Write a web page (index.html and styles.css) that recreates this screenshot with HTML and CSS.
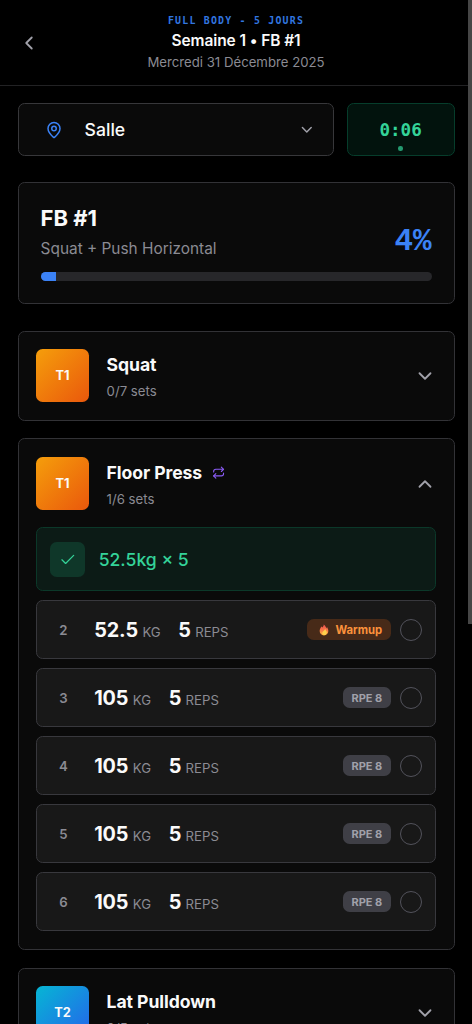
FILE: index.html
```html
<!DOCTYPE html>
<html lang="fr">
<head>
<meta charset="utf-8">
<title>Semaine 1 • FB #1</title>
<link rel="stylesheet" href="styles.css">
</head>
<body>
<div class="screen">
  <header class="header">
    <svg class="back" viewBox="0 0 24 24"><path d="m15 18-6-6 6-6"/></svg>
    <div class="heading">
      <div class="program">FULL BODY - 5 JOURS</div>
      <h1 class="title">Semaine 1 • FB #1</h1>
      <div class="date">Mercredi 31 Décembre 2025</div>
    </div>
  </header>
  <main class="main">
    <div class="controls">
      <div class="place">
        <svg class="pin" viewBox="0 0 24 24"><path d="M20 10c0 4.993-5.539 10.193-7.399 11.799a1 1 0 0 1-1.202 0C9.539 20.193 4 14.993 4 10a8 8 0 0 1 16 0"/><circle cx="12" cy="10" r="3"/></svg>
        <span class="place-name">Salle</span>
        <svg class="chevron small" viewBox="0 0 24 24"><path d="m6 9 6 6 6-6"/></svg>
      </div>
      <div class="timer">0:06<span class="dot"></span></div>
    </div>
    <section class="card summary">
      <div class="summary-top">
        <div>
          <h2 class="session">FB #1</h2>
          <div class="focus">Squat + Push Horizontal</div>
        </div>
        <div class="percent">4%</div>
      </div>
      <div class="track"><div class="fill" style="width:4%"></div></div>
    </section>
    <section class="card exercise">
      <div class="exercise-head">
        <div class="tier">T1</div>
        <div class="info"><h3 class="name">Squat</h3><div class="count">0/7 sets</div></div>
        <svg class="chevron" viewBox="0 0 24 24"><path d="m6 9 6 6 6-6"/></svg>
      </div>
    </section>
    <section class="card exercise">
      <div class="exercise-head">
        <div class="tier">T1</div>
        <div class="info"><h3 class="name">Floor Press <svg class="repeat" viewBox="0 0 24 24"><path d="m17 2 4 4-4 4"/><path d="M3 11v-1a4 4 0 0 1 4-4h14"/><path d="m7 22-4-4 4-4"/><path d="M21 13v1a4 4 0 0 1-4 4H3"/></svg></h3><div class="count">1/6 sets</div></div>
        <svg class="chevron" viewBox="0 0 24 24"><path d="m18 15-6-6-6 6"/></svg>
      </div>
      <div class="sets">
        <div class="done"><span class="tick"><svg viewBox="0 0 24 24"><path d="M20 6 9 17l-5-5"/></svg></span><span>52.5kg × 5</span></div>
        <div class="set"><span class="num">2</span><b class="value">52.5</b><span class="unit">KG</span><b class="value reps">5</b><span class="unit">REPS</span><span class="tag warm"><svg class="flame" viewBox="0 0 12 14"><defs><linearGradient id="fire" x1="0" y1="0" x2="0" y2="1"><stop offset="0" stop-color="#e94f50"/><stop offset=".5" stop-color="#f97849"/><stop offset="1" stop-color="#ffb338"/></linearGradient></defs><path fill="url(#fire)" d="M5.6.4C6 2.2 4.6 3 3.7 4 3.3 3.7 3.4 3 3.4 2.6 1.8 4.2.8 6 .8 8.3c0 3 2.2 5.2 5.2 5.2s5.2-2.2 5.2-5.2c0-2-1-3.3-1.5-4.8-.5.5-.7 1.100-.8 1.600C8.300 3.200 7.300 1.300 5.600.4Z"/><path fill="#ffd14d" d="M7.300 5.500c.2 2-2.500 2.500-3.300 4.500-.6 1.500.5 3 2.200 3s3.400-1.300 3.200-3.400C9.300 8.300 8 7.500 7.300 5.500Z"/></svg>Warmup</span><span class="ring"></span></div>
        <div class="set"><span class="num">3</span><b class="value">105</b><span class="unit">KG</span><b class="value reps">5</b><span class="unit">REPS</span><span class="tag">RPE 8</span><span class="ring"></span></div>
        <div class="set"><span class="num">4</span><b class="value">105</b><span class="unit">KG</span><b class="value reps">5</b><span class="unit">REPS</span><span class="tag">RPE 8</span><span class="ring"></span></div>
        <div class="set"><span class="num">5</span><b class="value">105</b><span class="unit">KG</span><b class="value reps">5</b><span class="unit">REPS</span><span class="tag">RPE 8</span><span class="ring"></span></div>
        <div class="set"><span class="num">6</span><b class="value">105</b><span class="unit">KG</span><b class="value reps">5</b><span class="unit">REPS</span><span class="tag">RPE 8</span><span class="ring"></span></div>
      </div>
    </section>
    <section class="card exercise">
      <div class="exercise-head">
        <div class="tier blue">T2</div>
        <div class="info"><h3 class="name">Lat Pulldown</h3><div class="count">0/5 sets</div></div>
        <svg class="chevron" viewBox="0 0 24 24"><path d="m6 9 6 6 6-6"/></svg>
      </div>
    </section>
  </main>
  <div class="scrollbar"></div>
</div>
</body>
</html>
```
FILE: styles.css
```css
* { box-sizing: border-box; }
body { margin: 0; background: #000; color: #fafafa; font-family: Inter, sans-serif; }
h1, h2, h3 { margin: 0; }
svg { fill: none; stroke: currentColor; stroke-width: 2; stroke-linecap: round; stroke-linejoin: round; flex: none; display: block; }
.screen { position: relative; width: 472px; height: 1024px; overflow: hidden; }
.header { display: grid; grid-template-columns: 22px 1fr 22px; align-items: center; height: 86px; padding: 0 17.600px; border-bottom: 1px solid #222224; }
.back { width: 22px; height: 22px; color: #a1a1aa; }
.heading { text-align: center; }
.program { font: 700 9.900px/14px "DejaVu Sans Mono", monospace; letter-spacing: 1.220px; color: #3277e0; }
.title { margin-top: 1px; font-size: 15.500px; line-height: 24px; font-weight: 600; letter-spacing: -.1px; }
.date { font-size: 13.200px; line-height: 19px; color: #8b8b93; }
.main { padding: 17.300px 17.400px 0 17.600px; }
.controls { display: grid; grid-template-columns: 316px 108px; justify-content: space-between; height: 53px; margin-bottom: 26px; }
.place, .timer { border: 1px solid #37373a; border-radius: 6.600px; background: #0a0a0a; display: flex; align-items: center; }
.place { padding: 0 17.500px 0 26px; }
.pin { width: 18px; height: 18px; color: #3b82f6; }
.place-name { flex: 1; margin-left: 22px; font-size: 17.600px; font-weight: 500; }
.chevron { width: 22px; height: 22px; color: #a1a1aa; }
.chevron.small { width: 17.600px; height: 17.600px; }
.timer { position: relative; justify-content: center; background: #02130d; border-color: #063d2b; color: #34d399; font: 700 17.600px "DejaVu Sans Mono", monospace; }
.dot { position: absolute; bottom: 4.500px; left: calc(50% - 2.200px); width: 4.400px; height: 4.400px; border-radius: 50%; background: #249a70; }
.card { border: 1px solid #323236; border-radius: 6.600px; background: #0a0a0a; }
.summary { height: 122px; padding: 22px; margin-bottom: 26.400px; }
.summary-top { display: flex; justify-content: space-between; align-items: center; height: 54px; }
.session { padding-top: 1px; font-size: 22px; line-height: 27px; font-weight: 700; letter-spacing: 0; }
.focus { margin-top: 5px; font-size: 15.400px; line-height: 24px; color: #8b8b93; }
.percent { padding-top: 20px; font: 700 30.900px/38px "Liberation Mono", monospace; color: #3b82f6; }
.track { height: 8.800px; margin-top: 13px; border-radius: 5px; background: #27272a; overflow: hidden; }
.fill { height: 100%; background: #3b82f6; }
.exercise { padding: 17.600px 17.600px 17.600px 17.400px; margin-bottom: 17.600px; }
.exercise-head { display: flex; align-items: center; height: 53px; }
.tier { width: 53px; height: 53px; border-radius: 6.600px; background: linear-gradient(135deg, #f59e0b, #ea580c); display: grid; place-items: center; font-size: 12.800px; font-weight: 700; }
.tier.blue { background: linear-gradient(135deg, #06b6d4, #2563eb); }
.info { flex: 1; margin-left: 17.600px; padding-top: 1px; }
.name { display: flex; align-items: center; gap: 10px; font-size: 17.600px; line-height: 26px; font-weight: 700; letter-spacing: -.07px; }
.repeat { width: 13.200px; height: 13.200px; color: #8b5cf6; }
.count { margin-top: 3px; font-size: 13.200px; line-height: 20px; color: #8b8b93; }
.sets { display: grid; gap: 9px; margin: 16.800px 0 .8px; }
.done { display: flex; align-items: center; gap: 13.200px; height: 64px; padding: 1px 13.200px 0; border: 1px solid #0b3829; border-radius: 6.600px; background: #0c1b16; color: #34d399; font-size: 17.600px; font-weight: 500; }
.tick { width: 35.300px; height: 35.300px; border-radius: 6.600px; background: #0f3729; display: grid; place-items: center; }
.tick svg { width: 17.600px; height: 17.600px; stroke-width: 1.700; }
.set { display: flex; align-items: center; height: 59px; padding: 1px 13.200px 0; border: 1px solid #38383d; border-radius: 6.600px; background: #181818; }
.num { width: 26.400px; text-align: center; font-size: 13.200px; font-weight: 600; color: #8b8b93; }
.value { margin-left: 17.600px; font-size: 19.800px; font-weight: 700; letter-spacing: -.1px; }
.reps { margin-left: 17.600px; }
.unit { margin: 4px 0 0 4.400px; font-size: 13.200px; color: #8b8b93; }
.tag { margin-left: auto; height: 21px; padding: 0 8.600px; border-radius: 6.600px; background: #3f3f46; color: #a1a1aa; display: flex; align-items: center; font-size: 11px; font-weight: 700; }
.warm { background: #472a18; color: #fb923c; font-size: 11.300px; }
.flame { width: 10px; height: 12px; margin: 0 6.500px 0 3px; stroke: none; }
.ring { width: 22px; height: 22px; margin-left: 9px; border: 1px solid #52525b; border-radius: 50%; }
.scrollbar { position: absolute; top: 0; right: 0; width: 4px; height: 624px; background: #464646; }
```
